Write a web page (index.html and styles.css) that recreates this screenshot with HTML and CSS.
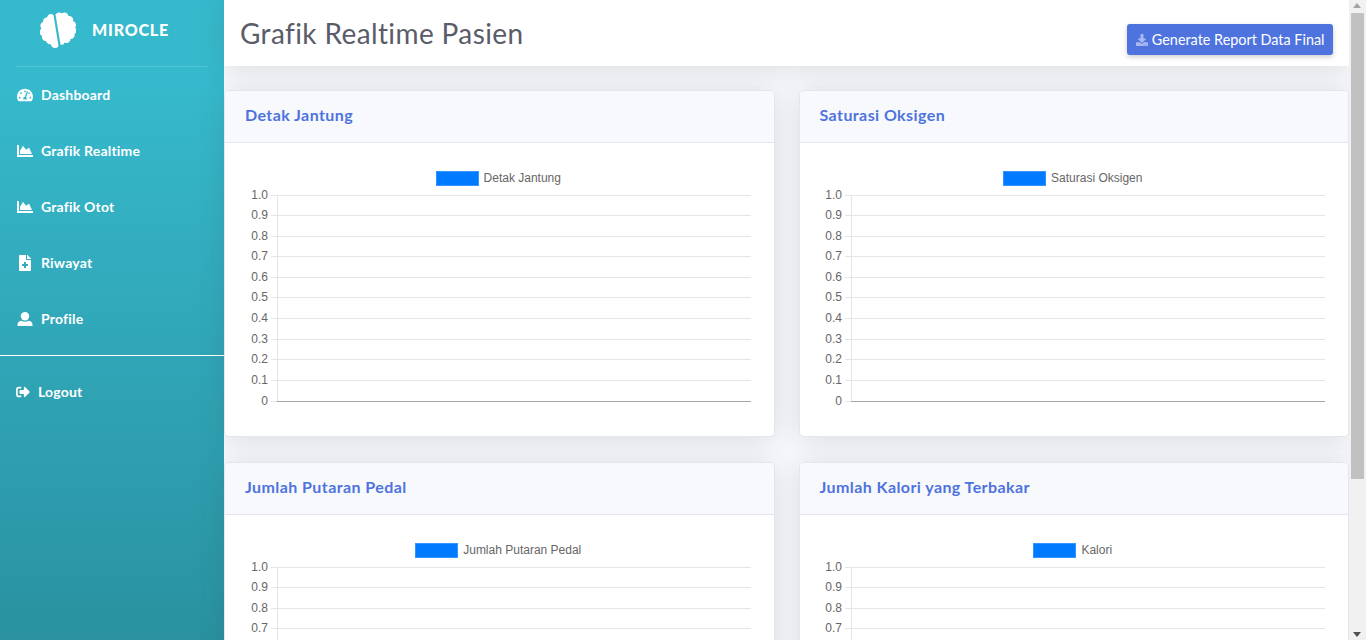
FILE: index.html
```html
<!DOCTYPE html>
<html lang="en">
<head>
    <meta charset="UTF-8">
    <meta name="viewport" content="width=device-width, initial-scale=1.0">
    <title>Grafik Realtime Pasien</title>
    <link rel="stylesheet" href="styles.css">
</head>
<body>
    <div class="wrapper">
        <aside class="sidebar">
            <a class="brand" href="#">
                <svg class="brand-icon" viewBox="0 0 36 36"><path d="M13.500 3A4 4 0 0 0 7 5.500 4 4 0 0 0 3 10 4 4 0 0 0 1.500 16.500 4.500 4.500 0 0 0 2 24 4 4 0 0 0 6 29 4 4 0 0 0 11 32 4 4 0 0 0 18.500 34z"/><path d="M15.500 2.500A4.500 4.500 0 0 1 22 1.500 4 4 0 0 1 28.500 4 4 4 0 0 1 33 9 4 4 0 0 1 35 15.500 4 4 0 0 1 34.500 22 4 4 0 0 1 30.500 27 4 4 0 0 1 24.500 30.500 3 3 0 0 1 20.500 32.500z"/></svg>
                <span class="brand-text">MIROCLE</span>
            </a>
            <hr class="divider">
            <nav>
                <a class="nav-link" href="#">
                    <svg class="nav-icon" viewBox="0 0 576 512"><path fill-rule="evenodd" d="M288 32C128.940 32 0 160.940 0 320c0 52.800 14.250 102.260 39.060 144.800 5.610 9.620 16.300 15.200 27.440 15.200h443c11.140 0 21.830-5.580 27.440-15.200C561.750 422.260 576 372.800 576 320c0-159.060-128.940-288-288-288zm0 64c14.710 0 26.580 10.130 30.320 23.650-1.110 2.260-2.640 4.230-3.450 6.670l-9.220 27.670c-5.130 3.490-10.970 6.010-17.640 6.010-17.670 0-32-14.330-32-32S270.330 96 288 96zM96 384c-17.670 0-32-14.330-32-32s14.330-32 32-32 32 14.330 32 32-14.330 32-32 32zm48-160c-17.670 0-32-14.330-32-32s14.330-32 32-32 32 14.330 32 32-14.330 32-32 32zm246.770-72.410l-61.330 184C343.130 347.330 352 364.540 352 384c0 11.720-3.380 22.550-8.880 32H232.880c-5.500-9.450-8.880-20.280-8.880-32 0-33.940 26.500-61.430 59.900-63.590l61.340-184.010c4.170-12.560 17.730-19.450 30.360-15.170 12.570 4.190 19.350 17.790 15.170 30.360zm14.660 57.200l15.520-46.550c3.470-1.290 7.130-2.230 11.050-2.230 17.670 0 32 14.330 32 32s-14.330 32-32 32c-11.380-.01-20.890-6.280-26.570-15.220zM480 384c-17.670 0-32-14.330-32-32s14.330-32 32-32 32 14.330 32 32-14.330 32-32 32z"/></svg>
                    <span>Dashboard</span>
                </a>
                <a class="nav-link" href="#">
                    <svg class="nav-icon" viewBox="0 0 512 512"><path d="M500 384c6.600 0 12 5.400 12 12v40c0 6.600-5.400 12-12 12H12c-6.600 0-12-5.400-12-12V76c0-6.600 5.400-12 12-12h40c6.600 0 12 5.400 12 12v308h436zM372.700 159.500L288 216l-85.300-113.700c-5.100-6.800-15.500-6.300-19.900 1L96 248v104h384l-84.200-187.400c-4.200-9.500-15.700-13.200-23.100-5.100z"/></svg>
                    <span>Grafik Realtime</span>
                </a>
                <a class="nav-link" href="#">
                    <svg class="nav-icon" viewBox="0 0 512 512"><path d="M500 384c6.600 0 12 5.400 12 12v40c0 6.600-5.400 12-12 12H12c-6.600 0-12-5.400-12-12V76c0-6.600 5.400-12 12-12h40c6.600 0 12 5.400 12 12v308h436zM372.700 159.500L288 216l-85.300-113.700c-5.100-6.800-15.500-6.300-19.900 1L96 248v104h384l-84.200-187.400c-4.200-9.500-15.700-13.200-23.100-5.100z"/></svg>
                    <span>Grafik Otot</span>
                </a>
                <a class="nav-link" href="#">
                    <svg class="nav-icon" viewBox="0 0 384 512"><path fill-rule="evenodd" d="M377 105L279.100 7c-4.500-4.500-10.600-7-17-7H256v128h128v-6.100c0-6.300-2.500-12.400-7-16.900zm-153 31V0H24C10.700 0 0 10.700 0 24v464c0 13.300 10.700 24 24 24h336c13.300 0 24-10.700 24-24V160H248c-13.200 0-24-10.800-24-24zm64 160v48c0 4.400-3.600 8-8 8h-56v56c0 4.400-3.600 8-8 8h-48c-4.400 0-8-3.600-8-8v-56h-56c-4.400 0-8-3.600-8-8v-48c0-4.400 3.600-8 8-8h56v-56c0-4.400 3.600-8 8-8h48c4.400 0 8 3.600 8 8v56h56c4.400 0 8 3.600 8 8z"/></svg>
                    <span>Riwayat</span>
                </a>
                <a class="nav-link" href="#">
                    <svg class="nav-icon" viewBox="0 0 16 16"><circle cx="8" cy="5.200" r="4.200"/><path d="M.5 15v-1.500C.5 11.500 2.500 9.800 4.500 9.800c1 .6 2.200 1 3.500 1s2.500-.4 3.500-1c2 0 4 1.700 4 3.700V15z"/></svg>
                    <span>Profile</span>
                </a>
            </nav>
            <hr class="divider-full">
            <a class="nav-link nav-logout" href="#">
                <svg class="nav-icon" viewBox="0 0 512 512"><path d="M497 273L329 441c-15 15-41 4.500-41-17v-96H152c-13.300 0-24-10.700-24-24v-96c0-13.300 10.700-24 24-24h136V88c0-21.400 25.900-32 41-17l168 168c9.300 9.400 9.300 24.600 0 34zM192 436v-40c0-6.600-5.400-12-12-12H96c-17.700 0-32-14.300-32-32V160c0-17.700 14.300-32 32-32h84c6.600 0 12-5.400 12-12V76c0-6.600-5.400-12-12-12H96c-53 0-96 43-96 96v192c0 53 43 96 96 96h84c6.600 0 12-5.400 12-12z"/></svg>
                <span>Logout</span>
            </a>
        </aside>

        <main class="content">
            <header class="topbar">
                <h1>Grafik Realtime Pasien</h1>
                <a class="btn-report" href="#">
                    <svg class="btn-icon" viewBox="0 0 512 512"><path d="M216 0h80c13.300 0 24 10.700 24 24v168h87.700c17.800 0 26.700 21.500 14.100 34.100L269.700 378.300c-7.500 7.500-19.800 7.500-27.300 0L90.100 226.100c-12.600-12.600-3.700-34.100 14.100-34.100H192V24c0-13.300 10.700-24 24-24zm296 376v112c0 13.300-10.700 24-24 24H24c-13.300 0-24-10.700-24-24V376c0-13.300 10.700-24 24-24h146.700l49 49c20.100 20.100 52.500 20.100 72.600 0l49-49H488c13.300 0 24 10.700 24 24zm-124 88c0-11-9-20-20-20s-20 9-20 20 9 20 20 20 20-9 20-20zm64 0c0-11-9-20-20-20s-20 9-20 20 9 20 20 20 20-9 20-20z"/></svg>
                    Generate Report Data Final
                </a>
            </header>
            <div class="card-grid" id="cardGrid"></div>
        </main>
    </div>

    <div class="scrollbar">
        <span class="arrow-up"></span>
        <span class="thumb"></span>
        <span class="arrow-down"></span>
    </div>

    <script>
        const charts = [
            { title: "Detak Jantung", legend: "Detak Jantung" },
            { title: "Saturasi Oksigen", legend: "Saturasi Oksigen" },
            { title: "Jumlah Putaran Pedal", legend: "Jumlah Putaran Pedal" },
            { title: "Jumlah Kalori yang Terbakar", legend: "Kalori" }
        ];

        // y of each grid line inside the plot, from 1.0 down to 0
        const gridY = [2, 22, 43, 63, 84, 104, 125, 146, 166, 187, 208];

        function chartSvg() {
            let rows = "";
            gridY.forEach((pos, i) => {
                let y = pos + 0.5;
                let label = i == 10 ? "0" : i == 0 ? "1.0" : "0." + (10 - i);
                rows += `
                    <line class="grid-line" x1="26" x2="506" y1="${y}" y2="${y}"></line>
                    <text class="tick" x="23" y="${y + 3.5}">${label}</text>
                `;
            });
            return `
                <svg class="plot" viewBox="0 0 510 223">
                    <line class="grid-line" x1="32.5" x2="32.5" y1="2" y2="208"></line>
                    ${rows}
                    <line class="zero-line" x1="32" x2="506" y1="208.5" y2="208.5"></line>
                </svg>
            `;
        }

        let cards = "";
        charts.forEach(chart => {
            cards += `
                <section class="card">
                    <h2 class="card-header">${chart.title}</h2>
                    <div class="card-body">
                        <div class="legend">
                            <span class="legend-box"></span>
                            <span>${chart.legend}</span>
                        </div>
                        ${chartSvg()}
                    </div>
                </section>
            `;
        });
        document.getElementById("cardGrid").innerHTML = cards;
    </script>
</body>
</html>
```

FILE: styles.css
```css
html, body {
    height: 640px;
    overflow: hidden;
}
body {
    margin: 0;
    padding-right: 17px;
    font-family: Lato, "Open Sans", sans-serif;
    background-color: #f8f9fc;
    color: #858796;
}
a {
    color: inherit;
    text-decoration: none;
}
.wrapper {
    display: flex;
    height: 841px;
}

/* sidebar */
.sidebar {
    width: 224px;
    flex-shrink: 0;
    color: white;
    background-image: linear-gradient(180deg, #36b9cc 10%, #258391 100%);
}
.brand {
    display: flex;
    align-items: center;
    height: 66px;
    padding-left: 40px;
    box-sizing: border-box;
}
.brand-icon {
    width: 36px;
    height: 36px;
    fill: white;
    margin-top: -6px;
}
.brand-text {
    margin-left: 16px;
    margin-top: -8px;
    font-size: 16px;
    font-weight: 900;
    letter-spacing: 0.8px;
}
.divider {
    margin: 0 16px;
    border: 0;
    border-top: 1px solid rgba(255, 255, 255, 0.15);
}
.nav-link {
    display: flex;
    align-items: center;
    height: 56px;
    padding-left: 17px;
    font-size: 14px;
    font-weight: 700;
    letter-spacing: 0.2px;
}
.nav-link span {
    margin-top: -2px;
}
.nav-icon {
    width: 16px;
    height: 16px;
    margin-right: 8px;
    fill: white;
}
.divider-full {
    margin: 8px 0;
    border: 0;
    border-top: 1px solid white;
}
.nav-logout {
    padding-left: 16px;
}
.nav-logout .nav-icon {
    width: 14px;
    height: 14px;
}

/* content */
.content {
    flex: 1;
    min-width: 0;
}
.topbar {
    display: flex;
    justify-content: space-between;
    height: 66px;
    padding: 0 16px;
    box-sizing: border-box;
    background-color: white;
    box-shadow: 0 2.4px 28px rgba(58, 59, 69, 0.15);
}
.topbar h1 {
    margin: 15px 0 0;
    font-size: 28px;
    font-weight: 400;
    line-height: 36px;
    letter-spacing: 0.38px;
    color: #5a5c69;
}
.btn-report {
    display: flex;
    align-items: center;
    align-self: flex-start;
    height: 31px;
    margin-top: 24px;
    padding: 0 8.5px;
    border-radius: 3px;
    font-size: 14.4px;
    color: white;
    background-color: #4e73df;
    box-shadow: 0 2px 5px rgba(58, 59, 69, 0.25);
}
.btn-icon {
    width: 12px;
    height: 12px;
    margin-right: 4px;
    fill: rgba(255, 255, 255, 0.5);
}
.card-grid {
    display: grid;
    grid-template-columns: repeat(2, 1fr);
    gap: 25px 24px;
    padding: 24px 0 32px;
}
.card {
    background-color: white;
    border: 1px solid #e3e6f0;
    border-radius: 5px;
    box-shadow: 0 2.4px 28px rgba(58, 59, 69, 0.15);
    overflow: hidden;
}
.card-header {
    display: flex;
    align-items: center;
    height: 52px;
    margin: 0;
    padding: 0 0 5px 20px;
    box-sizing: border-box;
    border-bottom: 1px solid #e3e6f0;
    background-color: #f8f9fc;
    font-size: 16px;
    font-weight: 700;
    letter-spacing: 0.42px;
    color: #4e73df;
}
.card-body {
    padding: 20px;
}

/* chart */
.legend {
    display: flex;
    justify-content: center;
    align-items: center;
    gap: 5px;
    height: 30px;
    margin-right: 2px;
    font-family: "Liberation Sans", Arial, sans-serif;
    font-size: 12px;
    color: #666;
}
.legend-box {
    width: 41px;
    height: 13px;
    border: 1px solid #3395ff;
    background-color: #007bff;
}
.plot {
    display: block;
    width: 510px;
    height: 223px;
    overflow: visible;
}
.card:nth-child(even) .plot {
    margin-left: -0.5px;
}
.grid-line {
    stroke: #e5e5e5;
    stroke-width: 1;
    shape-rendering: crispEdges;
}
.zero-line {
    stroke: #a6a6a6;
    stroke-width: 1;
    shape-rendering: crispEdges;
}
.tick {
    font-family: "Liberation Sans", Arial, sans-serif;
    font-size: 12px;
    fill: #666;
    text-anchor: end;
}

/* page scrollbar, headless browser does not paint one */
.scrollbar {
    position: fixed;
    top: 0;
    right: 0;
    width: 17px;
    height: 640px;
    background-color: #f1f1f1;
}
.thumb {
    position: absolute;
    top: 13px;
    left: 2px;
    width: 13px;
    height: 466px;
    background-color: #c1c1c1;
}
.arrow-up, .arrow-down {
    position: absolute;
    left: 4px;
    border-left: 4.500px solid transparent;
    border-right: 4.500px solid transparent;
}
.arrow-up {
    top: 3px;
    border-bottom: 5px solid #a3a3a3;
}
.arrow-down {
    bottom: 3px;
    border-top: 5px solid #505050;
}
```
